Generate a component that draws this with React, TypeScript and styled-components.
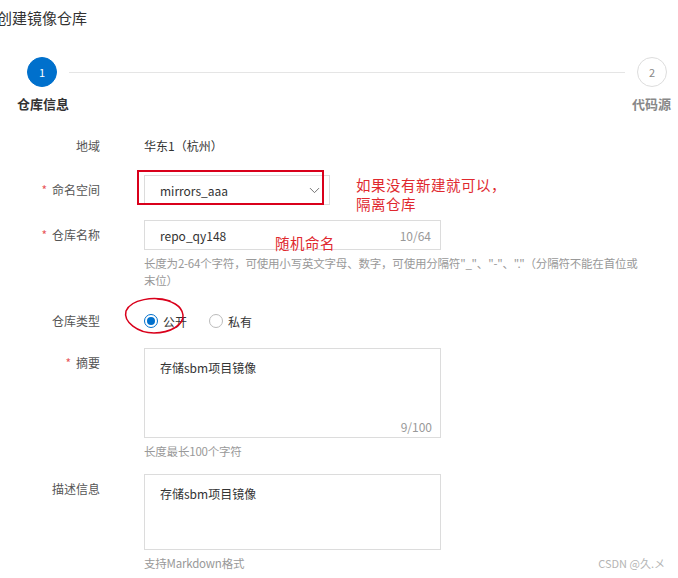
import React from "react";
import styled, { createGlobalStyle } from "styled-components";
import { ChevronDown } from "lucide-react";

const GlobalStyle = createGlobalStyle`
  html, body {
    margin: 0;
    padding: 0;
    background: #ffffff;
  }
  * {
    box-sizing: border-box;
  }
`;

const Page = styled.div`
  position: relative;
  width: 678px;
  height: 578px;
  overflow: hidden;
  background: #ffffff;
  font-family: "Noto Sans CJK SC", "Open Sans", sans-serif;
  color: #333;
`;

const Title = styled.div`
  padding-top: 8px;
  margin-left: -3px;
  font-size: 15px;
  line-height: 20px;
  color: #333;
`;

const StepBar = styled.div`
  display: flex;
  align-items: center;
  margin-top: 29px;
  padding: 0 11px 0 27px;
`;

const StepCircle = styled.div<{ $active?: boolean }>`
  width: 30px;
  height: 30px;
  border-radius: 50%;
  display: flex;
  align-items: center;
  justify-content: center;
  font-size: 11px;
  background: ${({ $active }) => ($active ? "#0070cc" : "#fff")};
  color: ${({ $active }) => ($active ? "#fff" : "#888")};
  border: 1px solid ${({ $active }) => ($active ? "#0070cc" : "#dddddd")};
`;

const StepLine = styled.div`
  flex: 1;
  height: 1px;
  margin: 0 12px;
  background: #e5e5e5;
`;

const StepLabels = styled.div`
  display: flex;
  justify-content: space-between;
  margin-top: 8px;
  padding: 0 7px 0 17px;
  font-size: 13px;
  line-height: 18px;
  font-weight: bold;
`;

const StepLabel = styled.span<{ $active?: boolean }>`
  color: ${({ $active }) => ($active ? "#333" : "#888")};
`;

const Form = styled.div`
  margin-top: 18px;
`;

const Row = styled.div<{ $gap: number }>`
  display: grid;
  grid-template-columns: 100px 1fr;
  column-gap: 44px;
  margin-top: ${({ $gap }) => $gap}px;
`;

const Label = styled.div`
  text-align: right;
  font-size: 12px;
  line-height: 30px;
  color: #555;
`;

const Star = styled.span`
  color: #e8585c;
  margin-right: 5px;
`;

const Field = styled.div`
  position: relative;
  display: flex;
  flex-direction: column;
  align-items: flex-start;
`;

const Value = styled.div`
  font-size: 12px;
  line-height: 30px;
  color: #333;
`;

const SelectBox = styled.div`
  position: relative;
  width: 186px;
  height: 30px;
  border: 1px solid #dcdcdc;
  display: flex;
  align-items: center;
  justify-content: space-between;
  padding: 0 6px 0 15px;
  font-size: 12px;
  color: #333;
`;

const TextInput = styled.div`
  width: 297px;
  height: 30px;
  border: 1px solid #dcdcdc;
  display: flex;
  align-items: center;
  justify-content: space-between;
  padding: 0 9px 0 15px;
  font-size: 12px;
  color: #333;
`;

const Counter = styled.span`
  font-size: 12px;
  color: #999;
`;

const TextArea = styled.div<{ $h: number }>`
  position: relative;
  width: 297px;
  height: ${({ $h }) => $h}px;
  border: 1px solid #dcdcdc;
  padding: 10px 15px;
  font-size: 12px;
  line-height: 17px;
  color: #333;
`;

const AreaCounter = styled(Counter)`
  position: absolute;
  right: 8px;
  bottom: 2px;
`;

const Help = styled.div`
  margin-top: 5px;
  width: 500px;
  font-size: 11.5px;
  letter-spacing: -0.2px;
  line-height: 17px;
  color: #999;
`;

const RadioGroup = styled.div`
  position: relative;
  display: flex;
  align-items: center;
  height: 30px;
  font-size: 12px;
  color: #333;
`;

const RadioItem = styled.label`
  display: flex;
  align-items: center;
  gap: 5px;
  margin-right: 22px;
`;

const RadioDot = styled.span<{ $checked?: boolean }>`
  position: relative;
  width: 14px;
  height: 14px;
  border-radius: 50%;
  border: 1px solid ${({ $checked }) => ($checked ? "#0070cc" : "#bbbbbb")};
  background: #fff;

  &::after {
    content: "";
    display: ${({ $checked }) => ($checked ? "block" : "none")};
    position: absolute;
    left: 2px;
    top: 2px;
    width: 8px;
    height: 8px;
    border-radius: 50%;
    background: #0070cc;
  }
`;

const MarkBox = styled.div`
  position: absolute;
  left: -8px;
  top: -6px;
  width: 187px;
  height: 35px;
  border: 2px solid #d9001b;
  pointer-events: none;
`;

const Note = styled.div<{ $left: number; $top: number }>`
  position: absolute;
  left: ${({ $left }) => $left}px;
  top: ${({ $top }) => $top}px;
  font-size: 14.5px;
  line-height: 19px;
  color: #e0282e;
  white-space: nowrap;
  letter-spacing: 0.5px;
`;

const Ellipse = styled.svg`
  position: absolute;
  left: -20px;
  top: -9px;
  overflow: visible;
  pointer-events: none;
`;

const Watermark = styled.div`
  position: absolute;
  right: 13px;
  bottom: 8px;
  font-size: 11px;
  line-height: 14px;
  color: #b5b5b5;
`;

const App: React.FC = () => {
  return (
    <>
      <GlobalStyle />
      <Page>
        <Title>创建镜像仓库</Title>

        <StepBar>
          <StepCircle $active>1</StepCircle>
          <StepLine />
          <StepCircle>2</StepCircle>
        </StepBar>
        <StepLabels>
          <StepLabel $active>仓库信息</StepLabel>
          <StepLabel>代码源</StepLabel>
        </StepLabels>

        <Form>
          <Row $gap={0}>
            <Label>地域</Label>
            <Field>
              <Value>华东1（杭州）</Value>
            </Field>
          </Row>

          <Row $gap={14}>
            <Label>
              <Star>*</Star>命名空间
            </Label>
            <Field>
              <SelectBox>
                <span>mirrors_aaa</span>
                <ChevronDown size={17} strokeWidth={1.3} color="#666" />
                <MarkBox />
              </SelectBox>
              <Note $left={212} $top={0}>
                如果没有新建就可以，
                <br />
                隔离仓库
              </Note>
            </Field>
          </Row>

          <Row $gap={15}>
            <Label>
              <Star>*</Star>仓库名称
            </Label>
            <Field>
              <TextInput>
                <span>repo_qy148</span>
                <Counter>10/64</Counter>
              </TextInput>
              <Note $left={131} $top={13}>
                随机命名
              </Note>
              <Help>
                长度为2-64个字符，可使用小写英文字母、数字，可使用分隔符"_"、"-"、"."（分隔符不能在首位或末位）
              </Help>
            </Field>
          </Row>

          <Row $gap={17}>
            <Label>仓库类型</Label>
            <Field>
              <RadioGroup>
                <RadioItem>
                  <RadioDot $checked />
                  公开
                </RadioItem>
                <RadioItem>
                  <RadioDot />
                  私有
                </RadioItem>
                <Ellipse width="62" height="40" viewBox="0 0 62 40">
                  <path
                    d="M46 4 C30 -1 7 2 2 14 C-1 25 14 36 30 36 C46 36 60 28 59 18 C58 9 48 3 33 2"
                    fill="none"
                    stroke="#d9001b"
                    strokeWidth="1.5"
                    strokeLinecap="round"
                  />
                </Ellipse>
              </RadioGroup>
            </Field>
          </Row>

          <Row $gap={12}>
            <Label>
              <Star>*</Star>摘要
            </Label>
            <Field>
              <TextArea $h={90}>
                存储sbm项目镜像
                <AreaCounter>9/100</AreaCounter>
              </TextArea>
              <Help>长度最长100个字符</Help>
            </Field>
          </Row>

          <Row $gap={14}>
            <Label>描述信息</Label>
            <Field>
              <TextArea $h={76}>存储sbm项目镜像</TextArea>
              <Help>支持Markdown格式</Help>
            </Field>
          </Row>
        </Form>

        <Watermark>CSDN @久.メ</Watermark>
      </Page>
    </>
  );
};

export default App;
